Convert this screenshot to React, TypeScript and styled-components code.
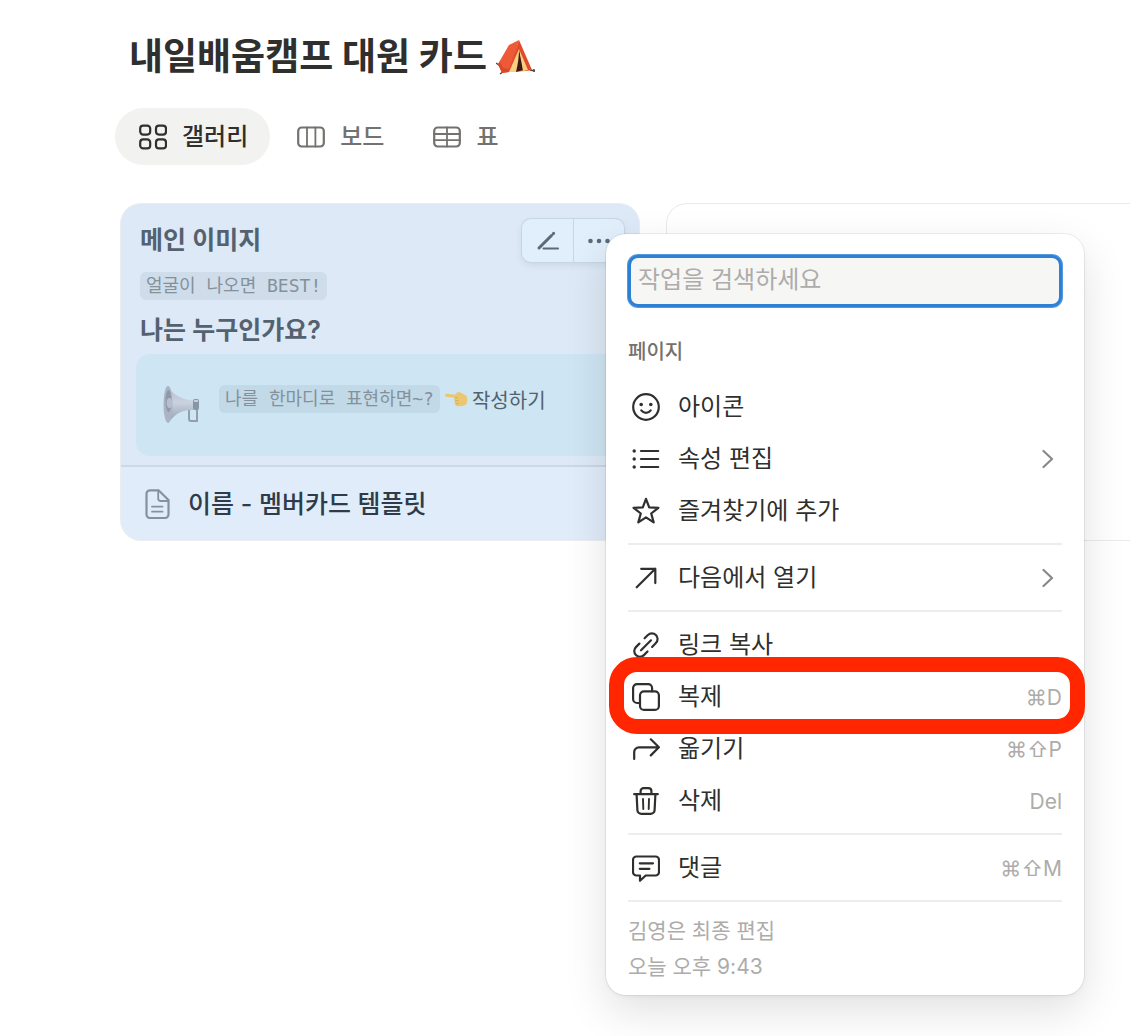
import React from "react";
import styled, { createGlobalStyle } from "styled-components";

const sans = `Inter, "Noto Sans CJK KR", sans-serif`;
const mono = `"DejaVu Sans Mono", "Noto Sans CJK KR", monospace`;

const GlobalStyle = createGlobalStyle`
  *, *::before, *::after { box-sizing: border-box; }
  body { margin: 0; background: #fff; font-family: ${sans}; color: #2f2f2d; }
  button, input { font: inherit; color: inherit; }
  svg { display: block; flex: none; }
`;

const Page = styled.main`
  min-height: 100vh;
  overflow: hidden;
  padding: 33px 0 40px 121px;
`;

const Title = styled.h1`
  display: flex;
  align-items: center;
  gap: 9px;
  margin: 0 0 27px 8px;
  font-size: 37px;
  line-height: 48px;
  font-weight: 700;
`;

const Tabs = styled.nav`
  display: flex;
  gap: 3px;
  margin: 0 0 39px -6px;
`;

const Tab = styled.button<{ $active?: boolean }>`
  display: flex;
  align-items: center;
  gap: 15px;
  height: 57px;
  padding: 0 22px 0 24px;
  border: 0;
  border-radius: 29px;
  background: ${(p) => (p.$active ? "#f2f2f1" : "transparent")};
  color: ${(p) => (p.$active ? "#2f2f2d" : "#73726e")};
  font-size: 24px;
  font-weight: 500;
  cursor: pointer;
`;

const TabText = styled.span`
  padding-bottom: 4px;
`;

const Gallery = styled.section`
  position: relative;
  display: grid;
  grid-auto-flow: column;
  grid-auto-columns: 518px;
  justify-content: start;
  gap: 28px;
`;

const Card = styled.article`
  position: relative;
  border-radius: 20px;
  overflow: hidden;
  background: #e0ecfa;
  box-shadow: 0 0 0 1px #ebedf0;
`;

const EmptyCard = styled.article`
  border-radius: 20px;
  box-shadow: 0 0 0 1px #eaeae9;
`;

const Cover = styled.div`
  padding: 18px 15px 9px;
  background: #dde9f6;
  border-bottom: 2px solid #cbd8e5;
`;

const CoverHeading = styled.h2`
  margin: 0 4px;
  font-size: 25px;
  line-height: 36px;
  font-weight: 600;
  color: #54616e;
`;

const Code = styled.code`
  padding: 0 6px;
  border-radius: 6px;
  background: rgba(110, 130, 145, 0.12);
  font-family: ${mono};
  font-size: 18px;
  line-height: 28px;
  color: #84919c;
  white-space: nowrap;
`;

const CodeRow = styled.div`
  display: flex;
  margin: 14px 4px 12px;
`;

const Callout = styled.div`
  display: flex;
  gap: 15px;
  margin-top: 6px;
  padding: 30px 26px;
  border-radius: 14px;
  background: #cee5f3;
`;

const CalloutText = styled.div`
  display: flex;
  align-items: center;
  gap: 4px;
  height: 30px;
  font-size: 20px;
  color: #54616e;
`;

const CardName = styled.a`
  display: flex;
  align-items: center;
  gap: 18px;
  height: 73px;
  padding: 0 24px;
  font-size: 25px;
  font-weight: 500;
  color: #2f3b48;
  text-decoration: none;
`;

const CardNameText = styled.span`
  padding-bottom: 4px;
`;

const CardActions = styled.div`
  position: absolute;
  top: 15px;
  right: 15px;
  display: flex;
  border-radius: 9px;
  background: #e1eefb;
  box-shadow: 0 0 0 1px #c8d5e3, 0 3px 7px rgba(60, 90, 120, 0.12);
`;

const ActionButton = styled.button`
  display: grid;
  place-items: center;
  width: 51px;
  height: 43px;
  padding: 0;
  border: 0;
  background: none;
  color: #5c6a78;
  cursor: pointer;

  & + & { border-left: 1px solid #c8d5e3; }
`;

const Menu = styled.div`
  position: absolute;
  top: 30px;
  left: 485px;
  width: 478px;
  padding: 21px 22px 10px;
  border-radius: 20px;
  background: #fff;
  box-shadow: 0 0 0 1px rgba(0, 0, 0, 0.06), 0 2px 4px rgba(0, 0, 0, 0.04),
    0 16px 44px rgba(0, 0, 0, 0.12);
`;

const Search = styled.input`
  display: block;
  width: 100%;
  height: 52px;
  padding: 0 7px 3px;
  border: 3px solid #2e80d4;
  border-radius: 10px;
  outline: 0;
  background: #f6f6f5;
  box-shadow: 0 0 0 1px #549ae0;
  font-size: 24px;

  &::placeholder { color: #adacaa; opacity: 1; }
`;

const GroupLabel = styled.h3`
  margin: 31px 0 15px;
  font-size: 20px;
  line-height: 28px;
  font-weight: 500;
  color: #73726e;
`;

const Separator = styled.hr`
  height: 2px;
  margin: 6px 0 7px;
  border: 0;
  background: #ededec;
`;

const Item = styled.button<{ $marked?: boolean }>`
  position: relative;
  display: flex;
  align-items: center;
  gap: 14px;
  width: 100%;
  height: 52px;
  padding: 0;
  border: 0;
  background: none;
  text-align: left;
  font-size: 24px;
  cursor: pointer;

  ${(p) =>
    p.$marked &&
    `&::after {
      content: "";
      position: absolute;
      z-index: 1;
      inset: -14px -23px -11px -19px;
      border: 15px solid #ff2600;
      border-radius: 28px;
      pointer-events: none;
    }`}
`;

const IconSlot = styled.span`
  display: grid;
  place-items: center;
  width: 36px;
`;

const ItemText = styled.span`
  flex: 1;
  padding-bottom: 6px;
`;

const Shortcut = styled.kbd`
  font-family: ${sans};
  font-size: 21px;
  color: #adacaa;
`;

const ChevronSlot = styled.span`
  padding-right: 8px;
  color: #8a8987;
`;

const Meta = styled.footer`
  padding-top: 4px;
  font-size: 21px;
  line-height: 36px;
  color: #adacaa;
`;

const MetaLine = styled.p`
  margin: 0;
`;

function Icon({ children, width = 28, height = 28 }: { children: React.ReactNode; width?: number; height?: number }) {
  return (
    <svg
      width={width}
      height={height}
      viewBox={`0 0 ${width} ${height}`}
      fill="none"
      stroke="currentColor"
      strokeWidth="2.2"
      strokeLinecap="round"
      strokeLinejoin="round"
      aria-hidden="true"
    >
      {children}
    </svg>
  );
}

const icons = {
  gallery: (
    <>
      <rect x="1.2" y="2.6" width="10" height="9" rx="3" />
      <rect x="17" y="2.6" width="10" height="9" rx="3" />
      <rect x="1.2" y="16.4" width="10" height="9" rx="3" />
      <rect x="17" y="16.4" width="10" height="9" rx="3" />
    </>
  ),
  board: (
    <>
      <rect x="1.2" y="4.5" width="25.6" height="19" rx="3.5" />
      <path d="M10 4.5v19M18.4 4.5v19" strokeWidth="1.8" />
    </>
  ),
  table: (
    <>
      <rect x="1.2" y="4.5" width="25.6" height="19" rx="3.5" />
      <path d="M14 4.5v19M1 11h26M1 17.2h26" strokeWidth="1.8" />
    </>
  ),
  smile: (
    <>
      <circle cx="14" cy="14" r="12.8" />
      <circle cx="9.2" cy="11.5" r="1.8" fill="currentColor" stroke="none" />
      <circle cx="18.8" cy="11.5" r="1.8" fill="currentColor" stroke="none" />
      <path d="M9.3 17.4c2.4 3.2 7 3.2 9.4 0" />
    </>
  ),
  list: (
    <>
      <path d="M9 6h17.2M9 14h17.2M9 22h17.2" />
      <g fill="currentColor" stroke="none">
        <circle cx="2.2" cy="6" r="1.7" />
        <circle cx="2.2" cy="14" r="1.7" />
        <circle cx="2.2" cy="22" r="1.7" />
      </g>
    </>
  ),
  star: <path d="M14 1.8l3.2 8.6 9.2.4-7.2 5.7 2.5 8.9-7.7-5.1-7.7 5.1 2.500-8.900-7.200-5.700 9.200-.4z" />,
  open: <path d="M4.7 23.3L23.3 4.8M9.2 4.8h14.1v14.3" />,
  link: (
    <>
      <path d="M12.6 7.300l3.300-3.300a5.600 5.600 0 0 1 8 0 5.600 5.600 0 0 1 0 8l-3.800 3.900" />
      <path d="M7.400 12.600l-3.500 3.500a5.700 5.700 0 0 0 0 8 5.700 5.700 0 0 0 8 0l3.600-3.600" />
      <path d="M9 19.300L19 9.300" />
    </>
  ),
  copy: (
    <>
      <rect x="8" y="8.300" width="18.900" height="18.600" rx="4" />
      <path d="M8 20H5.100a4 4 0 0 1-4-4V5.100a4 4 0 0 1 4-4h11a4 4 0 0 1 4 4v3.200" />
    </>
  ),
  move: <path d="M2.200 24v-7a4.700 4.700 0 0 1 4.700-4.700h20M18.800 4.300l8.100 8-8.100 8.100" />,
  trash: (
    <>
      <path d="M2.200 7.200h23.600M8.600 7.200V4.100a3 3 0 0 1 3-3h4.800a3 3 0 0 1 3 3v3.100" />
      <path d="M4.600 7.200l.8 15.900a4 4 0 0 0 4 3.800h9.200a4 4 0 0 0 4-3.800l.8-15.900" />
      <path d="M11 12l.3 10M17 12l-.3 10" strokeWidth="1.900" />
    </>
  ),
  comment: (
    <>
      <path d="M4.500 2.500h19A3.500 3.500 0 0 1 27 6v12a3.500 3.500 0 0 1-3.500 3.500h-9.800L8 26.800v-5.300H4.500A3.500 3.500 0 0 1 1 18V6a3.500 3.500 0 0 1 3.500-3.500z" />
      <path d="M7.800 9.300H21M7.800 14.800h9.600" />
    </>
  ),
};

function TentEmoji() {
  return (
    <svg width="40" height="36" viewBox="0 0 40 36" aria-hidden="true">
      <path d="M0 24l4 3M4 35l4-3M34 31l5 1M38 30v3" stroke="#5a4038" strokeWidth="1.400" fill="none" />
      <path d="M13 6L23 1 13 33l-7 1-4-9z" fill="#ee5a38" />
      <path d="M2 25l4 9 7-1 1-3-7-1-3-6z" fill="#d8492b" />
      <path d="M23 1l13 30-6 1-18 1z" fill="#e24a2a" />
      <path d="M23 10l6 21-7 2h-9z" fill="#f3d283" />
      <path d="M23 10l5 21-8 2c2-8 3-16 3-23z" fill="#43160f" />
      <path d="M23 10l9 21-5 1z" fill="#f3d283" />
    </svg>
  );
}

function MegaphoneEmoji() {
  return (
    <svg width="42" height="42" viewBox="0 0 42 42" aria-hidden="true">
      <defs>
        <linearGradient id="horn" x1="0" y1="0" x2="0" y2="1">
          <stop offset="0" stopColor="#b3bdca" />
          <stop offset="0.45" stopColor="#cbd2df" />
          <stop offset="1" stopColor="#8f9caf" />
        </linearGradient>
      </defs>
      <path d="M27 25v10a2 2 0 0 0 2 2h6V25" fill="none" stroke="#8fa0b0" strokeWidth="2" />
      <path d="M6 2c4 8 12 13 26 15v9c-13-1-20 5-26 13z" fill="url(#horn)" />
      <ellipse cx="6" cy="20.500" rx="4.500" ry="18.500" fill="#aab4c3" />
      <ellipse cx="6.500" cy="17" rx="3" ry="11" fill="#8e99a9" />
      <ellipse cx="7.500" cy="19" rx="2.800" ry="5" fill="#b7bfce" />
      <rect x="31" y="15" width="6" height="11" rx="2" fill="#8796a6" />
      <path d="M32 17h4M30 27v8h3" stroke="#d8e5ef" strokeWidth="1.400" fill="none" />
    </svg>
  );
}

function PointingHandEmoji() {
  return (
    <svg width="24" height="18" viewBox="0 0 24 18" aria-hidden="true">
      <path
        d="M1 5.200c0-1.100.8-1.600 2-1.400l8 1 2-2.300c.8-.8 2-.7 3.300 0L22 5.600c1 .7 1.300 2 1.300 4.200 0 3-1 5-3.300 5.800-2 .8-5.600.9-7.500.3-1.400-.5-1.700-1.500-1.200-2.500-1-.7-1.200-1.800-.5-2.800-.9-.8-.9-1.900-.3-2.900L2.300 6.700C1.500 6.500 1 6.100 1 5.200z"
        fill="#ebc771"
      />
      <path d="M11 10.700h3.500M11.600 13.500h3M11 7.700h3" stroke="#cfab5a" strokeWidth="0.900" fill="none" />
    </svg>
  );
}

function Chevron() {
  return (
    <ChevronSlot>
      <Icon width={12} height={20}>
        <path d="M1.500 2l8.500 8-8.500 8" />
      </Icon>
    </ChevronSlot>
  );
}

type MenuEntry = {
  icon: keyof typeof icons;
  label: string;
  shortcut?: string;
  submenu?: boolean;
  marked?: boolean;
};

const menuGroups: MenuEntry[][] = [
  [
    { icon: "smile", label: "아이콘" },
    { icon: "list", label: "속성 편집", submenu: true },
    { icon: "star", label: "즐겨찾기에 추가" },
  ],
  [{ icon: "open", label: "다음에서 열기", submenu: true }],
  [
    { icon: "link", label: "링크 복사" },
    { icon: "copy", label: "복제", shortcut: "⌘D", marked: true },
    { icon: "move", label: "옮기기", shortcut: "⌘⇧P" },
    { icon: "trash", label: "삭제", shortcut: "Del" },
  ],
  [{ icon: "comment", label: "댓글", shortcut: "⌘⇧M" }],
];

function PageMenu() {
  return (
    <Menu>
      <Search type="text" placeholder="작업을 검색하세요" aria-label="작업을 검색하세요" />
      <GroupLabel>페이지</GroupLabel>
      {menuGroups.map((group) => (
        <React.Fragment key={group[0].label}>
          {group.map((entry) => (
            <Item key={entry.label} type="button" $marked={entry.marked}>
              <IconSlot>
                <Icon>{icons[entry.icon]}</Icon>
              </IconSlot>
              <ItemText>{entry.label}</ItemText>
              {entry.shortcut && <Shortcut>{entry.shortcut}</Shortcut>}
              {entry.submenu && <Chevron />}
            </Item>
          ))}
          <Separator />
        </React.Fragment>
      ))}
      <Meta>
        <MetaLine>김영은 최종 편집</MetaLine>
        <MetaLine>오늘 오후 9:43</MetaLine>
      </Meta>
    </Menu>
  );
}

export default function App() {
  return (
    <>
      <GlobalStyle />
      <Page>
        <Title>
          내일배움캠프 대원 카드
          <TentEmoji />
        </Title>
        <Tabs>
          <Tab type="button" $active>
            <Icon>{icons.gallery}</Icon>
            <TabText>갤러리</TabText>
          </Tab>
          <Tab type="button">
            <Icon>{icons.board}</Icon>
            <TabText>보드</TabText>
          </Tab>
          <Tab type="button">
            <Icon>{icons.table}</Icon>
            <TabText>표</TabText>
          </Tab>
        </Tabs>
        <Gallery>
          <Card>
            <Cover>
              <CoverHeading>메인 이미지</CoverHeading>
              <CodeRow>
                <Code>얼굴이 나오면 BEST!</Code>
              </CodeRow>
              <CoverHeading>나는 누구인가요?</CoverHeading>
              <Callout>
                <MegaphoneEmoji />
                <CalloutText>
                  <Code>나를 한마디로 표현하면~?</Code>
                  <PointingHandEmoji />
                  작성하기
                </CalloutText>
              </Callout>
            </Cover>
            <CardName href="#member-card">
              <Icon width={25} height={30}>
                <path d="M5 1.300h8.500L23.500 11v14.500a3.500 3.500 0 0 1-3.500 3.500H5a3.500 3.500 0 0 1-3.500-3.500v-20.700A3.500 3.500 0 0 1 5 1.300z" stroke="#8491a0" />
                <path d="M13.200 1.500v8a2.500 2.500 0 0 0 2.500 2.500h7.600M7 17.700h10.500M7 22.700h10.500" stroke="#8491a0" strokeWidth="1.800" />
              </Icon>
              <CardNameText>이름 - 멤버카드 템플릿</CardNameText>
            </CardName>
            <CardActions>
              <ActionButton type="button" aria-label="편집">
                <Icon width={24} height={20}>
                  <path d="M3 17L15.500 4.500" strokeWidth="3" />
                  <path d="M17.300 2.700l.3-.3" strokeWidth="3" />
                  <path d="M7.500 17.500H22" strokeWidth="2" />
                </Icon>
              </ActionButton>
              <ActionButton type="button" aria-label="더 보기">
                <Icon width={24} height={20}>
                  <g fill="currentColor" stroke="none">
                    <circle cx="3.500" cy="10" r="2.300" />
                    <circle cx="12" cy="10" r="2.300" />
                    <circle cx="20.500" cy="10" r="2.300" />
                  </g>
                </Icon>
              </ActionButton>
            </CardActions>
          </Card>
          <EmptyCard />
          <PageMenu />
        </Gallery>
      </Page>
    </>
  );
}
